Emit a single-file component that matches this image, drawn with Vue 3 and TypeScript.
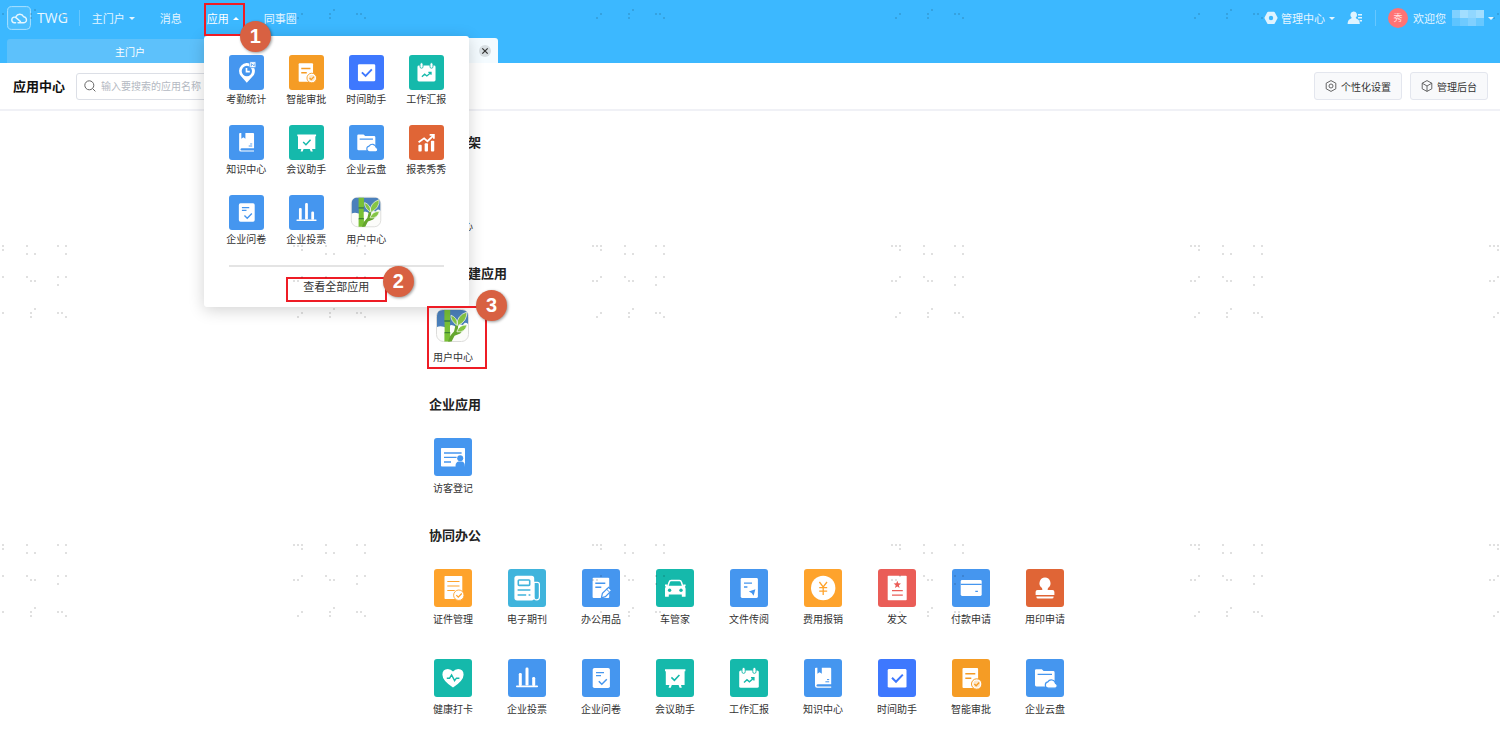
<script setup lang="ts">
interface AppEntry {
  name: string
  icon: string
  tone: string
}

interface Section {
  title: string
  apps: AppEntry[]
}

const apps = {
  attendance: { name: '考勤统计', icon: 'pin', tone: 'blue' },
  approval: { name: '智能审批', icon: 'approval', tone: 'orange' },
  time: { name: '时间助手', icon: 'time', tone: 'royal' },
  report: { name: '工作汇报', icon: 'calendar', tone: 'teal' },
  knowledge: { name: '知识中心', icon: 'book', tone: 'blue' },
  meeting: { name: '会议助手', icon: 'board', tone: 'teal' },
  drive: { name: '企业云盘', icon: 'folder', tone: 'blue' },
  charts: { name: '报表秀秀', icon: 'charts', tone: 'rust' },
  survey: { name: '企业问卷', icon: 'survey', tone: 'blue' },
  vote: { name: '企业投票', icon: 'bars', tone: 'blue' },
  users: { name: '用户中心', icon: 'bamboo', tone: 'plain' },
} satisfies Record<string, AppEntry>

const menuApps: AppEntry[] = [
  apps.attendance, apps.approval, apps.time, apps.report,
  apps.knowledge, apps.meeting, apps.drive, apps.charts,
  apps.survey, apps.vote, apps.users,
]

const sections: Section[] = [
  { title: '组织框架', apps: [apps.users] },
  { title: '企业自建应用', apps: [apps.users] },
  { title: '企业应用', apps: [{ name: '访客登记', icon: 'visitor', tone: 'blue' }] },
  {
    title: '协同办公',
    apps: [
      { name: '证件管理', icon: 'cert', tone: 'amber' },
      { name: '电子期刊', icon: 'journal', tone: 'cyan' },
      { name: '办公用品', icon: 'supplies', tone: 'blue' },
      { name: '车管家', icon: 'car', tone: 'teal' },
      { name: '文件传阅', icon: 'circulate', tone: 'blue' },
      { name: '费用报销', icon: 'expense', tone: 'amber' },
      { name: '发文', icon: 'dispatch', tone: 'red' },
      { name: '付款申请', icon: 'card', tone: 'blue' },
      { name: '用印申请', icon: 'stamp', tone: 'rust' },
      { name: '健康打卡', icon: 'heart', tone: 'teal' },
      apps.vote, apps.survey, apps.meeting, apps.report,
      apps.knowledge, apps.time, apps.approval, apps.drive,
    ],
  },
]

const dots: [number, number][] = [
  [4, 6], [8, 6], [12, 6], [36, 6], [67, 6], [75, 6], [12, 10], [36, 14], [44, 14], [75, 14],
  [12, 37], [36, 37], [67, 37], [75, 37], [4, 41], [8, 41], [40, 41], [44, 41], [67, 45],
  [44, 69], [12, 73], [40, 73], [67, 73], [71, 73], [8, 77], [40, 77], [75, 77],
]

const mosaic: [number, number, number][] = [
  [0, 0, 0.4], [8, 0, 0.6], [16, 0, 0.5], [24, 0, 0.6],
  [0, 8, 0.2], [8, 8, 0.3], [16, 8, 0.4], [24, 8, 0.25],
]
</script>

<template>
  <div class="page">
    <svg class="sprites" aria-hidden="true">
      <symbol id="pin" viewBox="0 0 38 38">
        <path d="M19.3 30 12.7 22.6A8.6 8.6 0 1 1 27 21.6Z" fill="#fff" />
        <circle cx="19.4" cy="17.4" r="5.6" fill="currentColor" />
        <path d="M19 14v4h3.6" fill="none" stroke="#fff" stroke-width="1.8" />
        <rect x="22.6" y="7.4" width="6.6" height="6.4" fill="#fff" stroke="currentColor" stroke-width=".8" />
        <path d="M24.4 12.2V9.4l3 2.6V9.2" fill="none" stroke="currentColor" stroke-width=".8" />
      </symbol>
      <symbol id="approval" viewBox="0 0 38 38">
        <rect x="10.5" y="9" width="15.6" height="20" rx="1" fill="#fff" />
        <path d="M13.3 14.7h10M13.3 19.3h6" stroke="currentColor" stroke-width="1.5" />
        <circle cx="24.7" cy="25" r="5.2" fill="#fff" stroke="currentColor" stroke-width="1" />
        <circle cx="24.7" cy="25" r="3.4" fill="currentColor" opacity=".25" />
        <path d="m22.4 25 1.7 1.8 3.1-3.3" fill="none" stroke="currentColor" stroke-width="1.4" />
      </symbol>
      <symbol id="time" viewBox="0 0 38 38">
        <rect x="9.7" y="10" width="18.8" height="18.6" rx="1.4" fill="#fff" />
        <path d="m14 18.8 4 4 6.8-7.2" fill="none" stroke="currentColor" stroke-width="2" />
      </symbol>
      <symbol id="calendar" viewBox="0 0 38 38">
        <rect x="9.2" y="11.4" width="19.6" height="17.4" rx="1.6" fill="#fff" />
        <g fill="#fff" stroke="currentColor" stroke-width=".9">
          <rect x="12" y="8.4" width="3.2" height="6" rx="1.6" />
          <rect x="22.8" y="8.4" width="3.2" height="6" rx="1.6" />
        </g>
        <path d="m14 23.6 3-2.8 2.4 2 4.2-3.6M21 18.8h2.9v2.6" fill="none" stroke="currentColor" stroke-width="1.4" />
      </symbol>
      <symbol id="book" viewBox="0 0 38 38">
        <path d="M11 9.6q0-.8 1-.8h1.4v6l2.2-1.6 2.2 1.6v-6h8.4q1 0 1 1v15.4H13.6q-1.2.2-1.2 1.3t1.2 1.1h13.6v1.2H13q-2 0-2-2z" fill="#fff" />
        <path d="M21.4 22.8h3.8M23 20.6h2.2" stroke="currentColor" stroke-width="1" />
      </symbol>
      <symbol id="board" viewBox="0 0 38 38">
        <path d="M9 10.3h20.4v2H28.6V26H9.8V12.3H9zM13.4 26h2.4l-1 2.8h-2.2zM22.6 26h2.4l.8 2.8h-2.2z" fill="#fff" />
        <path d="m15.4 18.4 3 3 5-5.4" fill="none" stroke="currentColor" stroke-width="1.6" />
      </symbol>
      <symbol id="folder" viewBox="0 0 38 38">
        <path d="M9 11.4q0-1.2 1.2-1.2h5.6l1.8 1.8h9.6q1.4 0 1.4 1.4v14H10.4Q9 27.400 9 26z" fill="#fff" />
        <path d="M11.6 15.300h14.400" stroke="currentColor" stroke-width="1.200" />
        <path d="M22.200 29.200a3.200 3.200 0 0 1-.4-6.300 4.200 4.200 0 0 1 7.700 1.500 2.500 2.500 0 0 1-.2 4.800z" fill="#fff" stroke="currentColor" stroke-width="1.200" />
      </symbol>
      <symbol id="charts" viewBox="0 0 38 38">
        <g fill="#fff">
          <rect x="10.200" y="21.400" width="3.600" height="7.400" rx="1" />
          <rect x="17" y="19.800" width="3.600" height="9" rx="1" />
          <rect x="23.800" y="17" width="3.600" height="11.800" rx="1" />
        </g>
        <path d="m10.400 18.800 6-4.400 3.600 3.200 6.600-6.200M22.400 10.600h4.600v4.400" fill="none" stroke="#fff" stroke-width="1.900" />
      </symbol>
      <symbol id="survey" viewBox="0 0 38 38">
        <rect x="10.700" y="9" width="17.200" height="20" rx="1.800" fill="#fff" />
        <path d="M14 13.600h8M14 16.700h5" stroke="currentColor" stroke-width="1.300" />
        <path d="m16.800 22.200 3 3 5-5" fill="none" stroke="currentColor" stroke-width="1.500" />
      </symbol>
      <symbol id="bars" viewBox="0 0 38 38">
        <g fill="#fff">
          <rect x="10.800" y="14" width="3" height="13" rx="1.300" />
          <rect x="17.500" y="8.600" width="3" height="18" rx="1.300" />
          <rect x="24.200" y="18" width="3" height="9" rx="1.300" />
          <rect x="8" y="26.500" width="22" height="1.700" rx=".8" />
        </g>
      </symbol>
      <symbol id="bamboo" viewBox="0 0 38 38">
        <rect x="2.500" y="2.500" width="32" height="32" rx="7" fill="#fcfcfa" stroke="#dcdcda" />
        <path d="M3 20V9q0-6 6-6h19q6 0 6 6v8q-3-3-5 1-4-2-6 3-6-6-10 0-6-3-10-1z" fill="#4b80bb" />
        <path d="M10.400 3h5.800v10.600h-5.800zM10.600 14.600H16V25h-5.400zM10.400 26h5.800v8.400h-5.800z" fill="#78c035" />
        <path d="M10.400 13.300h5.800v1.400h-5.800zM10.400 24.900h5.800v1.400h-5.800z" fill="#3f8430" />
        <path d="M14 34.400q2-6.400 6-9.800L21.800 17l2.600-.4-.8 7.600 7.200-2.600-4.600 5-5.600 2.200-3 5.600z" fill="#65a62e" />
        <path d="M22.400 18q-6-4.600-5.400-9.800 6.200 2.400 6.600 9zM23 18q-.4-9.400 9.800-13 .4 9-8.400 13.400zM23 24q3-6.600 10-6-2 7.800-10 6.800z" fill="#85c545" stroke="#eef5e8" stroke-width=".8" />
      </symbol>
      <symbol id="visitor" viewBox="0 0 38 38">
        <rect x="7" y="10" width="24" height="18.600" rx=".8" fill="#fff" />
        <path d="M10 15h17.600M10 19.400h12.600M10 24h7" stroke="currentColor" stroke-width="1.300" />
        <circle cx="26.200" cy="20.200" r="3" fill="currentColor" />
        <path d="M21.600 29v-1.600q0-3.200 2.800-4h3.600q2.800.8 2.800 4V29z" fill="currentColor" />
      </symbol>
      <symbol id="cert" viewBox="0 0 38 38">
        <rect x="10.500" y="7" width="17.800" height="23" rx=".8" fill="#fff" />
        <path d="M13.300 12.500h12.200M13.300 17h12.200M13.300 21.500h7.400" stroke="currentColor" stroke-width="1.200" />
        <circle cx="24.800" cy="26.200" r="5.200" fill="#fff" stroke="currentColor" stroke-width=".9" />
        <path d="m22.300 26.200 2 2 3.500-3.700" fill="none" stroke="currentColor" stroke-width="1.200" />
      </symbol>
      <symbol id="journal" viewBox="0 0 38 38">
        <path d="M26 13.400h3.400q2 0 2 2V28q0 2.800-2.700 2.800T26 28z" fill="none" stroke="#fff" stroke-width="1.200" />
        <rect x="6.400" y="6.800" width="19.800" height="24.600" rx="2.600" fill="#fff" />
        <rect x="10.300" y="11" width="11.400" height="5.400" rx=".8" fill="none" stroke="currentColor" stroke-width="1.600" />
        <path d="M9.600 21h12.800M9.600 26h8.600M20.600 26h1.800" stroke="currentColor" stroke-width="1.600" />
      </symbol>
      <symbol id="supplies" viewBox="0 0 38 38">
        <rect x="10.600" y="8.800" width="16.600" height="20.200" rx="1" fill="#fff" />
        <path d="M13.300 14.200h10M13.300 18.200h6" stroke="currentColor" stroke-width="1.400" />
        <path d="m19.400 28.800 1-4.400 6.200-6 3 3-6.200 6.200z" fill="#fff" stroke="currentColor" stroke-width="1.200" />
        <path d="m24.400 20 3.400 3.400" stroke="currentColor" stroke-width="1" />
      </symbol>
      <symbol id="car" viewBox="0 0 38 38">
        <path d="m11.600 18 1.600-5q.4-1.400 2-1.400h8.200q1.600 0 2 1.400l1.600 5" fill="none" stroke="#fff" stroke-width="1.500" />
        <path d="M9 15.400h2.400v1.400h15.800v-1.400h2.400v1.600l-.8.800q.8.800.8 2v7.400q0 .6-.6.600h-2.600q-.6 0-.6-.6v-1.800H12.800v1.800q0 .6-.6.600H9.600q-.6 0-.6-.6v-7.400q0-1.200.8-2l-.8-.8z" fill="#fff" />
        <circle cx="13.600" cy="21.200" r="1.700" fill="currentColor" />
        <circle cx="25" cy="21.200" r="1.700" fill="currentColor" />
      </symbol>
      <symbol id="circulate" viewBox="0 0 38 38">
        <rect x="10.700" y="9" width="17.200" height="20" rx="1.400" fill="#fff" />
        <path d="M14 14.200h8M14 18h3.400" stroke="currentColor" stroke-width="1.300" />
        <path d="m18.800 22.600 6.600-2.400-1.800 6.600-2-2.800z" fill="currentColor" />
      </symbol>
      <symbol id="expense" viewBox="0 0 38 38">
        <circle cx="19.200" cy="19" r="12.200" fill="#fff" />
        <path d="m15.400 13 3.800 5 3.800-5M19.200 18v8M15.200 18.600h8M15.200 22.200h8" fill="none" stroke="currentColor" stroke-width="1.300" />
      </symbol>
      <symbol id="dispatch" viewBox="0 0 38 38">
        <rect x="9.700" y="6.800" width="19" height="24.400" rx=".8" fill="#fff" />
        <path d="m19.300 11.800 1 2.500 2.700.2-2.100 1.700.7 2.700-2.300-1.500-2.300 1.500.7-2.700-2.100-1.700 2.700-.2z" fill="currentColor" />
        <path d="M14 21.700h10.800M14 26.200h10.800" stroke="currentColor" stroke-width="1.200" />
      </symbol>
      <symbol id="card" viewBox="0 0 38 38">
        <rect x="8.700" y="11" width="21" height="16" rx="1.400" fill="#fff" />
        <path d="M8.700 15.400h21M23.300 22.400h2.600" stroke="currentColor" stroke-width="1.100" />
      </symbol>
      <symbol id="stamp" viewBox="0 0 38 38">
        <path d="M19 8.600a5.700 5.700 0 0 1 3.300 10.200q-.8.800-.6 2.200h4.800q1.900 0 1.900 2v3H9.600v-3q0-2 1.900-2h4.800q.2-1.400-.6-2.200A5.700 5.700 0 0 1 19 8.600zM10.400 27.400h17.200v.6q0 1.600-1.600 1.600H12q-1.600 0-1.600-1.600z" fill="#fff" />
      </symbol>
      <symbol id="heart" viewBox="0 0 38 38">
        <path d="M19 28.600q-10.600-7-10.600-12.800 0-5.600 5.400-5.800 3.200 0 5.200 2.600 2-2.600 5.200-2.600 5.400.2 5.400 5.800 0 5.800-10.600 12.800z" fill="#fff" />
        <path d="M12.800 19.200h2.800l2-3.200 3 5.600 1.800-2.400h3" fill="none" stroke="currentColor" stroke-width="1.400" />
      </symbol>
    </svg>

    <header class="header">
      <div class="topbar">
        <a class="brand" href="#">
          <svg class="brand-logo" viewBox="0 0 24 24" aria-hidden="true">
            <rect x=".6" y=".6" width="22.800" height="22.800" rx="4" fill="#4cbefe" stroke="#a9e1ff" />
            <path d="M8.600 16.800H7.400a2.900 2.900 0 0 1-.4-5.700q1.200-.1 2.300.8l4.200 3.700M9 10.600a4.200 4.200 0 0 1 7.600.2 3 3 0 0 1-.2 6H11" fill="none" stroke="#e4f6ff" stroke-width="1.400" stroke-linecap="round" stroke-linejoin="round" />
          </svg>
          <span class="brand-name">TWG</span>
        </a>
        <nav class="nav">
          <button class="nav-item" type="button">主门户<span class="caret"></span></button>
          <button class="nav-item" type="button">消息</button>
          <div class="nav-drop">
            <button class="nav-item current" type="button" aria-expanded="true">应用<span class="caret up"></span></button>
            <div class="menu">
              <div class="menu-grid">
                <a v-for="app in menuApps" :key="app.name" class="app" href="#">
                  <svg class="tile small" :class="app.tone" aria-hidden="true"><use :href="'#' + app.icon" /></svg>
                  <span class="app-name">{{ app.name }}</span>
                </a>
              </div>
              <div class="menu-foot">
                <a class="view-all" href="#">查看全部应用</a>
                <span class="frame frame-all"></span>
                <span class="step step-two">2</span>
              </div>
            </div>
            <span class="frame frame-nav"></span>
            <span class="step step-one">1</span>
          </div>
          <button class="nav-item" type="button">同事圈</button>
        </nav>
        <div class="account">
          <button class="nav-item" type="button">
            <svg class="hexagon" viewBox="0 0 14 14" aria-hidden="true">
              <path d="M4.200.8h5.600q.6 0 .9.500l2.700 5q.3.600 0 1.200l-2.700 5q-.3.600-.9.600H4.200q-.6 0-.9-.6l-2.700-5q-.3-.6 0-1.200l2.700-5q.3-.5.900-.5z" fill="#def3ff" />
              <circle cx="7" cy="7" r="2.200" fill="#3cb8ff" />
            </svg>
            管理中心<span class="caret"></span>
          </button>
          <button class="nav-item contacts" type="button" aria-label="通讯录">
            <svg viewBox="0 0 16 14" width="16" height="14" aria-hidden="true">
              <path d="M6.500.6a3.400 3.400 0 0 1 2.200 6.100q.2.800 1.600 1.200 2.400.9 2.500 5.100H.6q.1-4.200 2.500-5.100 1.400-.4 1.600-1.200A3.400 3.400 0 0 1 6.500.6z" fill="#def3ff" />
              <path d="M11 3.800h4M11 6.800h4M12.600 9.800H15" stroke="#def3ff" stroke-width="1.400" />
            </svg>
          </button>
          <span class="divider"></span>
          <button class="nav-item user" type="button">
            <span class="avatar">秀</span>
            欢迎您
            <svg class="mosaic" viewBox="0 0 32 16" aria-hidden="true">
              <rect v-for="([x, y, alpha], i) in mosaic" :key="i" :x="x" :y="y" width="8" height="8" fill="#e6f6ff" :fill-opacity="alpha" />
            </svg>
            <span class="caret"></span>
          </button>
        </div>
      </div>
      <div class="tabs">
        <button class="tab" type="button">主门户</button>
        <div class="tab open">
          <span>应用中心</span>
          <button class="tab-close" type="button" aria-label="关闭">
            <svg viewBox="0 0 12 12" width="12" height="12" aria-hidden="true">
              <path d="m3.300 3.300 5.400 5.400M8.700 3.300 3.300 8.700" stroke="#333" stroke-width="1.200" />
            </svg>
          </button>
        </div>
      </div>
    </header>

    <div class="toolbar">
      <h1 class="toolbar-title">应用中心</h1>
      <label class="search">
        <svg viewBox="0 0 12 12" width="12" height="12" aria-hidden="true">
          <circle cx="5.300" cy="5.300" r="4.500" fill="none" stroke="#666" />
          <path d="m8.600 8.600 2.800 2.800" stroke="#666" />
        </svg>
        <input type="text" placeholder="输入要搜索的应用名称" aria-label="搜索应用" />
      </label>
      <div class="toolbar-actions">
        <button class="action" type="button">
          <svg viewBox="0 0 12 12" width="12" height="12" aria-hidden="true">
            <path d="M6 .6 10.800 3.200v5.600L6 11.400 1.200 8.800V3.200z" fill="none" stroke="#555" stroke-width=".9" />
            <circle cx="6" cy="6" r="2" fill="none" stroke="#555" stroke-width=".9" />
          </svg>
          个性化设置
        </button>
        <button class="action" type="button">
          <svg viewBox="0 0 12 12" width="12" height="12" aria-hidden="true">
            <path d="M6 .6 10.800 3.200v5.600L6 11.400 1.200 8.800V3.200zM1.200 3.200 6 6l4.800-2.800M6 6v5.400" fill="none" stroke="#555" stroke-width=".9" />
          </svg>
          管理后台
        </button>
      </div>
    </div>

    <main class="content">
      <section v-for="(section, index) in sections" :key="section.title" class="section">
        <h2 class="section-title">{{ section.title }}</h2>
        <div class="section-grid">
          <a v-for="app in section.apps" :key="app.name" class="app" href="#">
            <svg class="tile" :class="app.tone" aria-hidden="true"><use :href="'#' + app.icon" /></svg>
            <span class="app-name">{{ app.name }}</span>
            <template v-if="index === 1">
              <span class="frame frame-app"></span>
              <span class="step step-three">3</span>
            </template>
          </a>
        </div>
      </section>
    </main>

    <svg class="watermark" aria-hidden="true">
      <defs>
        <pattern id="dots" x="-10" y="239" width="299" height="299" patternUnits="userSpaceOnUse">
          <rect v-for="([x, y], i) in dots" :key="i" :x="x" :y="y" width="2" height="2" />
        </pattern>
      </defs>
      <rect width="100%" height="100%" fill="url(#dots)" />
    </svg>
  </div>
</template>

<style>
body {
  background: #fff;
}
</style>

<style scoped>
.page {
  position: relative;
  min-height: 100vh;
  box-sizing: border-box;
  overflow: hidden;
  font-family: "Open Sans", "Noto Sans CJK SC", sans-serif;
  font-size: 11px;
  color: #333;
}

button {
  border: 0;
  padding: 0;
  background: none;
  color: inherit;
  font: inherit;
}

a {
  color: inherit;
  text-decoration: none;
}

.sprites {
  position: absolute;
  width: 0;
  height: 0;
}

.header {
  background: #3cb8ff;
  color: #fff;
}

.topbar {
  display: flex;
  align-items: center;
  height: 36px;
  padding: 0 6px 0 7px;
}

.brand {
  display: flex;
  align-items: center;
  gap: 6px;
  height: 16px;
  padding-right: 11px;
  border-right: 1px solid #67c7ff;
}

.brand-logo {
  width: 24px;
  height: 24px;
}

.brand-name {
  font-size: 14px;
  line-height: 20px;
  color: #e8f7ff;
}

.nav {
  display: flex;
  gap: 25px;
  margin-left: 12px;
}

.nav-item {
  display: flex;
  align-items: center;
  height: 36px;
  color: #e4f5ff;
  white-space: nowrap;
}

.nav-item.current {
  color: #fff;
}

.nav-drop {
  position: relative;
}

.caret {
  margin-left: 4px;
  border: 3px solid transparent;
  border-top-color: currentColor;
  border-bottom: 0;
}

.caret.up {
  border: 3px solid transparent;
  border-bottom-color: currentColor;
  border-top: 0;
}

.account {
  display: flex;
  align-items: center;
  gap: 12px;
  margin-left: auto;
}

.hexagon {
  width: 14px;
  height: 14px;
  margin-right: 3px;
}

.divider {
  width: 1px;
  height: 16px;
  background: #67c7ff;
}

.avatar {
  width: 20px;
  height: 20px;
  margin-right: 5px;
  border-radius: 50%;
  background: #ff7374;
  color: #ffe6e6;
  font-size: 9px;
  line-height: 20px;
  text-align: center;
}

.mosaic {
  width: 32px;
  height: 16px;
  margin-left: 6px;
}

.tabs {
  display: flex;
  height: 27px;
  padding: 0 7px;
  align-items: flex-end;
}

.tab {
  flex: 0 1 246px;
  height: 24px;
  border-radius: 3px 3px 0 0;
  background: #5dc1fb;
  color: #fff;
  font-size: 10px;
  text-align: center;
}

.tab.open {
  display: flex;
  flex-basis: 245px;
  align-items: center;
  justify-content: space-between;
  height: 25px;
  padding-left: 12px;
  box-sizing: border-box;
  background: #f4fbff;
  color: #333;
}

.tab-close {
  display: flex;
  width: 12px;
  height: 12px;
  margin-right: 7px;
  border-radius: 50%;
  background: #d8dfe3;
}

.toolbar {
  display: flex;
  align-items: center;
  height: 46px;
  padding: 0 12px 0 13px;
  border-bottom: 2px solid #f0f1f6;
}

.toolbar-title {
  margin: 0 11px 0 0;
  font-size: 13px;
  font-weight: 700;
  line-height: 20px;
  color: #111;
}

.search {
  display: flex;
  align-items: center;
  gap: 5px;
  width: 240px;
  height: 27px;
  padding-left: 7px;
  border: 1px solid #dcdfe6;
  border-radius: 3px;
  box-sizing: border-box;
}

.search input {
  flex: 1;
  min-width: 0;
  border: 0;
  padding: 0;
  outline: 0;
  background: none;
  font: inherit;
  font-size: 10px;
}

.search input::placeholder {
  color: #b4b9c2;
}

.toolbar-actions {
  display: flex;
  gap: 8px;
  margin-left: auto;
}

.action {
  display: flex;
  align-items: center;
  gap: 4px;
  height: 28px;
  padding: 0 10px;
  border: 1px solid #e3e6ee;
  border-radius: 3px;
  background: #f8f9fb;
  font-size: 10px;
}

.app {
  position: relative;
  display: flex;
  flex-direction: column;
  align-items: center;
  gap: 4px;
}

.app-name {
  font-size: 10px;
  line-height: 16px;
  white-space: nowrap;
}

.tile {
  width: 38px;
  height: 38px;
  border-radius: 3px;
}

.tile.small {
  width: 35px;
  height: 35px;
}

.blue { background: #4596ef; color: #4596ef; }
.orange { background: #f59c25; color: #f59c25; }
.amber { background: #fea32c; color: #fea32c; }
.royal { background: #3e78fe; color: #3e78fe; }
.teal { background: #15b9ab; color: #15b9ab; }
.rust { background: #e06536; color: #e06536; }
.cyan { background: #40b4dc; color: #40b4dc; }
.red { background: #ea5d57; color: #ea5d57; }

.menu {
  position: absolute;
  top: 36px;
  left: -3px;
  z-index: 10;
  width: 265px;
  padding: 19px 25px 0;
  box-sizing: border-box;
  border-radius: 3px;
  background: #fff;
  box-shadow: 0 3px 16px rgba(0, 0, 0, 0.18);
  color: #333;
}

.menu-grid {
  display: grid;
  grid-template-columns: repeat(4, 35px);
  justify-content: space-between;
  row-gap: 18px;
}

.menu-grid .app {
  gap: 1px;
}

.menu-foot {
  position: relative;
  margin-top: 18px;
  padding: 10px 0;
  border-top: 2px solid #e4e4e4;
  line-height: 20px;
  text-align: center;
}

.frame {
  position: absolute;
  z-index: 11;
  border: 2px solid #ee1c25;
  box-sizing: border-box;
  pointer-events: none;
}

.step {
  position: absolute;
  z-index: 12;
  width: 31px;
  height: 31px;
  border-radius: 50%;
  background: #d86142;
  box-shadow: 1px 1px 3px rgba(0, 0, 0, 0.4);
  color: #fff;
  font: bold 20px/31px "Liberation Sans", sans-serif;
  text-align: center;
}

.frame-nav {
  top: 3px;
  right: -6px;
  bottom: 0;
  left: -3px;
}

.step-one {
  top: 21px;
  left: 33px;
}

.frame-all {
  top: 10px;
  right: 57px;
  bottom: 5px;
  left: 57px;
}

.step-two {
  top: -1px;
  right: 30px;
}

.frame-app {
  inset: -1px -10px -4px -2px;
}

.step-three {
  top: -17px;
  left: 47px;
}

.content {
  max-width: 642px;
  margin: 0 auto;
  padding: 21px 0 13px;
}

.section + .section {
  margin-top: 29px;
}

.section-title {
  margin: 0 0 24px;
  font-size: 13px;
  font-weight: 700;
  line-height: 20px;
  color: #222;
}

.section-grid {
  display: grid;
  grid-template-columns: repeat(auto-fill, 48px);
  gap: 32px 26px;
}

.watermark {
  position: absolute;
  inset: 0;
  z-index: 20;
  width: 100%;
  height: 100%;
  fill: #000;
  fill-opacity: 0.35;
  pointer-events: none;
}
</style>
